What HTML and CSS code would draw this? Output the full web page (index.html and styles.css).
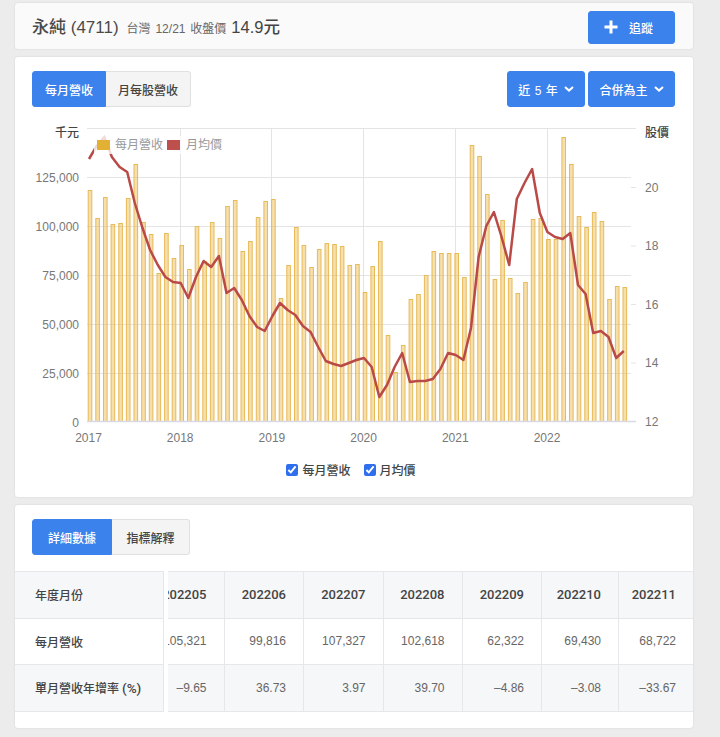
FILE: index.html
```html
<!DOCTYPE html>
<html lang="zh-Hant">
<head>
    <meta charset="UTF-8">
    <title>永純 (4711) 每月營收</title>
    <link rel="stylesheet" href="styles.css">
</head>
<body>

<!-- Stock header -->
<div class="card stock-head">
    <div class="stock-title">
        <span class="stock-name">永純 (4711)</span>
        <span class="stock-date">台灣 12/21 收盤價</span>
        <span class="stock-price">14.9元</span>
    </div>
    <button class="btn btn-follow">
        <svg class="icon-plus" viewBox="0 0 14 14"><path d="M7 0.5v13M0.5 7h13"/></svg>
        <span>追蹤</span>
    </button>
</div>

<!-- Revenue chart -->
<div class="card chart-card">
    <div class="toolbar">
        <div class="tabs">
            <button class="tab active">每月營收</button>
            <button class="tab">月每股營收</button>
        </div>
        <div class="actions">
            <button class="btn btn-range">近 5 年
                <svg class="icon-chevron" viewBox="0 0 10 6"><path d="M1 1l4 3.6L9 1"/></svg>
            </button>
            <button class="btn btn-basis">合併為主
                <svg class="icon-chevron" viewBox="0 0 10 6"><path d="M1 1l4 3.6L9 1"/></svg>
            </button>
        </div>
    </div>
    <svg id="chart" class="chart" viewBox="15 120 678 330"></svg>
    <div class="series-toggle">
        <label><input type="checkbox" checked>每月營收</label>
        <label><input type="checkbox" checked>月均價</label>
    </div>
</div>

<!-- Detail table -->
<div class="card table-card">
    <div class="tabs tabs-wide">
        <button class="tab active">詳細數據</button>
        <button class="tab">指標解釋</button>
    </div>
    <div class="table-wrap">
        <table class="data-table fixed-col">
            <tr class="stripe"><th>年度月份</th></tr>
            <tr><th>每月營收</th></tr>
            <tr class="stripe"><th>單月營收年增率 <span class="unit">(%)</span></th></tr>
        </table>
        <div class="table-scroll">
            <table class="data-table months">
                <tr class="stripe">
                    <th>202205</th><th>202206</th><th>202207</th><th>202208</th><th>202209</th><th>202210</th><th>202211</th>
                </tr>
                <tr>
                    <td>105,321</td><td>99,816</td><td>107,327</td><td>102,618</td><td>62,322</td><td>69,430</td><td>68,722</td>
                </tr>
                <tr class="stripe">
                    <td>–9.65</td><td>36.73</td><td>3.97</td><td>39.70</td><td>–4.86</td><td>–3.08</td><td>–33.67</td>
                </tr>
            </table>
        </div>
    </div>
</div>

<script src="script.js"></script>
</body>
</html>
```

FILE: styles.css
```css
* {
    box-sizing: border-box;
}
body {
    font-family: 'Liberation Sans', 'Noto Sans CJK TC', sans-serif;
    background-color: #ececec;
    color: #444;
    margin: 0;
    padding: 3px 27px 9px 15px;
}
.card {
    background-color: white;
    border-radius: 3px;
    box-shadow: 0 0 2px rgba(0, 0, 0, 0.12);
    margin-bottom: 8px;
}
.card:last-child {
    margin-bottom: 0;
}
button {
    font-family: inherit;
    cursor: pointer;
}

/* Stock header */
.stock-head {
    height: 46px;
    background-color: #fafafa;
    display: flex;
    justify-content: space-between;
    align-items: center;
    padding: 0 18px 0 17px;
}
.stock-title {
    display: flex;
    align-items: baseline;
    margin-bottom: 2px;
}
.stock-name {
    font-size: 17px;
    font-weight: 500;
    color: #4a4a4a;
}
.stock-date {
    font-size: 12px;
    color: #666;
    margin-left: 8px;
    word-spacing: 1.5px;
}
.stock-price {
    font-size: 16.5px;
    font-weight: 500;
    color: #444;
    margin-left: 5px;
}

/* Buttons */
.btn {
    background-color: #3b82ec;
    color: white;
    border: 1px solid #3b82ec;
    border-radius: 3px;
    font-size: 12px;
    font-weight: 500;
    height: 36px;
    display: flex;
    align-items: center;
    justify-content: center;
}
.btn-follow {
    width: 87px;
    height: 33px;
    margin-top: 2px;
    gap: 11px;
    justify-content: flex-start;
    padding: 0 0 0 15px;
}
.icon-plus {
    width: 14px;
    height: 14px;
    fill: none;
    stroke: white;
    stroke-width: 3;
}
.icon-chevron {
    width: 10px;
    height: 6px;
    margin-left: 6px;
    fill: none;
    stroke: white;
    stroke-width: 2;
}
.btn-range {
    width: 78px;
    word-spacing: 1px;
}
.btn-basis {
    width: 87px;
}

/* Tabs */
.toolbar {
    display: flex;
    justify-content: space-between;
}
.tabs {
    display: flex;
}
.tab {
    height: 36px;
    padding: 0 12px;
    font-size: 12px;
    font-weight: 500;
    color: #444;
    background-color: #f4f4f4;
    border: 1px solid #e0e0e0;
    border-left: none;
    border-radius: 0 3px 3px 0;
}
.tab.active {
    color: white;
    background-color: #3b82ec;
    border: 1px solid #3b82ec;
    border-radius: 3px 0 0 3px;
}
.tabs-wide .tab {
    padding: 0 14.5px;
}
.tabs-wide .tab.active {
    padding: 0 15px;
}
.actions {
    display: flex;
    gap: 3px;
}

/* Chart */
.chart-card {
    height: 440px;
    padding: 14px 18px 0 17px;
}
.chart {
    display: block;
    width: 678px;
    height: 330px;
    margin: 13px -18px 0 -17px;
}
.grid-line {
    stroke: #e4e4e4;
    stroke-width: 1;
}
.base-line {
    stroke: #d9d9e6;
    stroke-width: 1.5;
}
.bar {
    fill: rgba(232, 184, 72, 0.45);
    stroke: #e8ba58;
    stroke-width: 1;
}
.price-line {
    fill: none;
    stroke: #b94a48;
    stroke-width: 2.5;
    stroke-linejoin: round;
}
.legend-bg {
    fill: rgba(255, 255, 255, 0.8);
}
.axis-label {
    font-size: 12px;
    fill: #777;
}
.axis-title {
    font-size: 12px;
    font-weight: 500;
    fill: #444;
}
.legend-label {
    font-size: 12px;
    fill: #999;
}
.series-toggle {
    display: flex;
    justify-content: center;
    gap: 13px;
    margin: 11px 5px 0 0;
    font-size: 12px;
    font-weight: 500;
    color: #444;
}
.series-toggle label {
    display: flex;
    align-items: center;
    gap: 4px;
}
.series-toggle input {
    width: 12px;
    height: 12px;
    margin: 0;
    accent-color: #2f6fed;
}

/* Table */
.table-card {
    height: 223px;
    padding-top: 14px;
}
.tabs-wide {
    margin-left: 17px;
}
.table-wrap {
    display: flex;
    margin-top: 16px;
}
.data-table {
    border-collapse: collapse;
    table-layout: fixed;
    font-size: 12px;
}
.data-table th, .data-table td {
    height: 46.6px;
    padding: 0 17px 0 0;
    text-align: right;
    border: 1px solid #e6e7ea;
    color: #666;
    font-weight: normal;
}
.data-table th {
    font-family: Roboto, 'Noto Sans CJK TC', sans-serif;
    color: #444;
    font-weight: 500;
    font-size: 13px;
}
.stripe {
    background-color: #f6f7f9;
}
.fixed-col {
    width: 149px;
    flex: none;
    margin-right: 4px;
}
.fixed-col th {
    text-align: left;
    padding: 0 0 0 20px;
    font-size: 12px;
    font-weight: 500;
    border-left: none;
}
.unit {
    font-size: 13.5px;
}
.table-scroll {
    flex: 1;
    min-width: 0;
    overflow: hidden;
    display: flex;
    justify-content: flex-end;
}
.months {
    width: 547px;
    flex: none;
}
.months tr > :last-child {
    border-right: none;
}
.months th:nth-child(1) { width: 79px; }
.months th:nth-child(2) { width: 79.5px; }
.months th:nth-child(3) { width: 79.5px; }
.months th:nth-child(4) { width: 79px; }
.months th:nth-child(5) { width: 79.5px; }
.months th:nth-child(6) { width: 77px; }
.months th:nth-child(7) { width: 74.5px; }
```

FILE: script.js
```js
// Top edge of each monthly bar and the monthly price, in chart pixels, from 2017/01
const barTops = [
    190, 218, 197, 224, 223, 198, 164, 222, 234, 273, 233, 258,
    245, 269, 226, 261, 222, 238, 206, 200, 251, 241, 217, 201,
    199, 298, 265, 227, 245, 267, 249, 243, 244, 246, 265, 264,
    292, 266, 241, 335, 372, 345, 299, 294, 275, 251, 253, 253,
    253, 277, 145, 156, 194, 279, 220, 278, 293, 282, 219, 218,
    239, 239, 137, 164, 216, 227, 212, 221, 299, 286, 287
];
const priceYs = [
    159, 146, 137, 157, 167, 172, 203, 228, 250, 265, 277, 282,
    283, 298, 277, 261, 267, 256, 293, 288, 300, 316, 327, 331,
    316, 303, 310, 315, 326, 332, 347, 361, 364, 366, 363, 360,
    358, 367, 397, 385, 367, 353, 382, 381, 381, 379, 369, 353,
    355, 360, 328, 257, 226, 212, 237, 265, 199, 183, 169, 213,
    232, 237, 239, 233, 285, 294, 333, 331, 337, 358, 351
];

const chart = document.getElementById('chart');
const SVG_NS = 'http://www.w3.org/2000/svg';
const zeroY = 421.5;
const firstX = 90;
const pitch = 7.64;

function add(tag, attrs, text) {
    const el = document.createElementNS(SVG_NS, tag);
    Object.keys(attrs).forEach(key => el.setAttribute(key, attrs[key]));
    if (text) el.textContent = text;
    chart.appendChild(el);
    return el;
}

function addLabel(x, y, text, anchor, className) {
    add('text', { x: x, y: y, 'text-anchor': anchor, class: className || 'axis-label' }, text);
}

// Grid and left axis
[128.5, 177.5, 226.5, 275.5, 324.5, 373.5].forEach(y => {
    add('line', { x1: 87, x2: 631, y1: y, y2: y, class: 'grid-line' });
});
[180.5, 271.5, 363.5, 455.5, 547.5].forEach(x => {
    add('line', { x1: x, x2: x, y1: 128, y2: 421, class: 'grid-line' });
});
['125,000', '100,000', '75,000', '50,000', '25,000', '0'].forEach((label, i) => {
    addLabel(79, 182 + i * 48.9, label, 'end');
});
addLabel(79, 137, '千元', 'end', 'axis-title');

// Right axis
[20, 18, 16, 14, 12].forEach((value, i) => {
    const y = 187.5 + i * 58.5;
    add('line', { x1: 631, x2: 636, y1: y, y2: y, class: 'grid-line' });
    addLabel(645, y + 4, String(value), 'start');
});
add('line', { x1: 631, x2: 636, y1: 128.5, y2: 128.5, class: 'grid-line' });
addLabel(645, 137, '股價', 'start', 'axis-title');

// Year labels
['2017', '2018', '2019', '2020', '2021', '2022'].forEach((year, i) => {
    addLabel(88.5 + i * 91.7, 442, year, 'middle');
});

// Bars
barTops.forEach((top, i) => {
    add('rect', {
        x: (firstX + pitch * i - 1.8).toFixed(1),
        y: top + 0.5,
        width: 3.6,
        height: zeroY - top - 0.5,
        class: 'bar'
    });
});
add('line', { x1: 87, x2: 636, y1: zeroY, y2: zeroY, class: 'base-line' });

// Monthly average price
const points = priceYs.map((y, i) => `${(firstX + pitch * i - 1).toFixed(1)},${y}`).join(' ');
add('polyline', { points: points, class: 'price-line' });

// Legend sits over the plot with a see-through backing
add('rect', { x: 94, y: 136, width: 130, height: 18, class: 'legend-bg' });
add('rect', { x: 97, y: 140, width: 13, height: 10, fill: '#e2b134' });
addLabel(115, 149, '每月營收', 'start', 'legend-label');
add('rect', { x: 167, y: 140, width: 13, height: 10, fill: '#bd504c' });
addLabel(186, 149, '月均價', 'start', 'legend-label');
```
